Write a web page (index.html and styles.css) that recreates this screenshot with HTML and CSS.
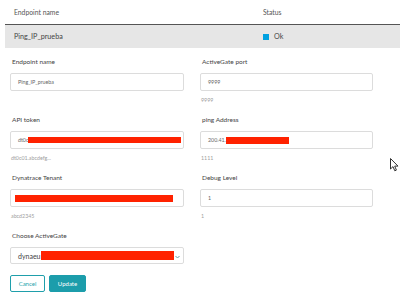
FILE: index.html
```html
<!DOCTYPE html>
<html lang="en">
<head>
  <meta charset="UTF-8">
  <title>Endpoint - ActiveGate</title>
  <link rel="stylesheet" href="styles.css">
</head>
<body>

  <!-- Endpoint list -->
  <div class="endpoint-table">
    <div class="table-head">
      <div class="cell name-col">Endpoint name</div>
      <div class="cell">Status</div>
    </div>
    <div class="table-row">
      <div class="cell name-col row-name">Ping_IP_prueba</div>
      <div class="cell status"><span class="status-dot"></span>Ok</div>
    </div>
  </div>

  <!-- Edit endpoint -->
  <form class="edit-form">
    <div class="field">
      <label>Endpoint name</label>
      <div class="input">Ping_IP_prueba</div>
    </div>
    <div class="field">
      <label>ActiveGate port</label>
      <div class="input">9999</div>
      <div class="hint">9999</div>
    </div>

    <div class="field">
      <label>API token</label>
      <div class="input">dt0c<span class="redact token-redact"></span></div>
      <div class="hint">dt0c01.abcdefg...</div>
    </div>
    <div class="field">
      <label>ping Address</label>
      <div class="input">200.41.<span class="redact ip-redact"></span></div>
      <div class="hint">1111</div>
    </div>

    <div class="field">
      <label>Dynatrace Tenant</label>
      <div class="input"><span class="redact tenant-redact"></span></div>
      <div class="hint">abcd2345</div>
    </div>
    <div class="field">
      <label>Debug Level</label>
      <div class="input">1</div>
      <div class="hint">1</div>
    </div>

    <div class="field">
      <label>Choose ActiveGate</label>
      <div class="input select">dynaeu<span class="redact gate-redact"></span>
        <svg class="caret" width="5" height="4" viewBox="0 0 5 4"><path d="M0.5 1 L2.5 3 L4.5 1" fill="none" stroke="#6b9aa3" stroke-width="1"/></svg>
      </div>
    </div>
    <div></div>

    <div class="actions">
      <button type="button" class="btn-cancel">Cancel</button>
      <button type="button" class="btn-update">Update</button>
    </div>
  </form>

  <!-- mouse pointer -->
  <svg class="pointer" width="9" height="14" viewBox="0 0 9 14">
    <path d="M0.5 0.5 L0.5 11 L3 8.6 L4.8 12.8 L6.4 12.1 L4.7 8.1 L8 8.1 Z" fill="#fff" stroke="#333" stroke-width="1"/>
  </svg>

</body>
</html>
```

FILE: styles.css
```css
body {
  margin: 0;
  font-family: Lato, "Liberation Sans", sans-serif;
  background: #fff;
  color: #4a4a4a;
  position: relative;
  height: 295px;
  overflow: hidden;
}

.endpoint-table {
  margin-left: 5px;
}

.table-head {
  display: flex;
  height: 24px;
  align-items: center;
  font-size: 6.8px;
  color: #555;
  border-bottom: 1px solid #555;
}

.table-row {
  display: flex;
  height: 23px;
  align-items: center;
  background: #e6e6e6;
  font-size: 7.2px;
}

.cell {
  padding-left: 9px;
}

.name-col {
  width: 240px;
}

.row-name {
  color: #444;
}

.status {
  display: flex;
  align-items: center;
  gap: 5px;
}

.status-dot {
  width: 6px;
  height: 6px;
  background: #00a1e0;
}

.edit-form {
  display: grid;
  grid-template-columns: 174px 173px;
  column-gap: 16px;
  row-gap: 10px;
  padding: 9px 0 0 10px;
}

.field label {
  display: block;
  font-size: 6.5px;
  line-height: 10px;
  height: 10px;
  margin-bottom: 6px;
  padding-left: 2px;
  color: #444;
}

.input {
  height: 18px;
  box-sizing: border-box;
  border: 1px solid #dcdcdc;
  border-radius: 2px;
  display: flex;
  align-items: center;
  padding-left: 7px;
  font-size: 5.3px;
  color: #666;
}

.hint {
  margin-top: 4px;
  font-size: 5.3px;
  line-height: 10px;
  color: #a0a0a0;
  padding-left: 1px;
}

.redact {
  display: inline-block;
  background: #ff2200;
}

.token-redact {
  width: 153px;
  height: 6px;
}

.ip-redact {
  width: 63px;
  height: 7px;
}

.tenant-redact {
  width: 158px;
  height: 7px;
  margin-left: -3px;
}

.select {
  height: 17px;
  font-size: 7px;
  color: #444;
}

.gate-redact {
  width: 133px;
  height: 9px;
}

.caret {
  margin-left: 1px;
  margin-top: 3px;
}

.actions {
  display: flex;
  gap: 4px;
  margin-top: 1px;
}

.actions button {
  height: 17px;
  border-radius: 2px;
  font-family: Lato, "Liberation Sans", sans-serif;
  font-size: 6px;
  padding: 0;
  cursor: pointer;
}

.btn-cancel {
  width: 35px;
  background: #fff;
  border: 1px solid #1f9fab;
  color: #1f9fab;
}

.btn-update {
  width: 37px;
  background: #1c9dab;
  border: 1px solid #1c9dab;
  color: #fff;
}

.pointer {
  position: absolute;
  left: 390px;
  top: 158px;
}
```
